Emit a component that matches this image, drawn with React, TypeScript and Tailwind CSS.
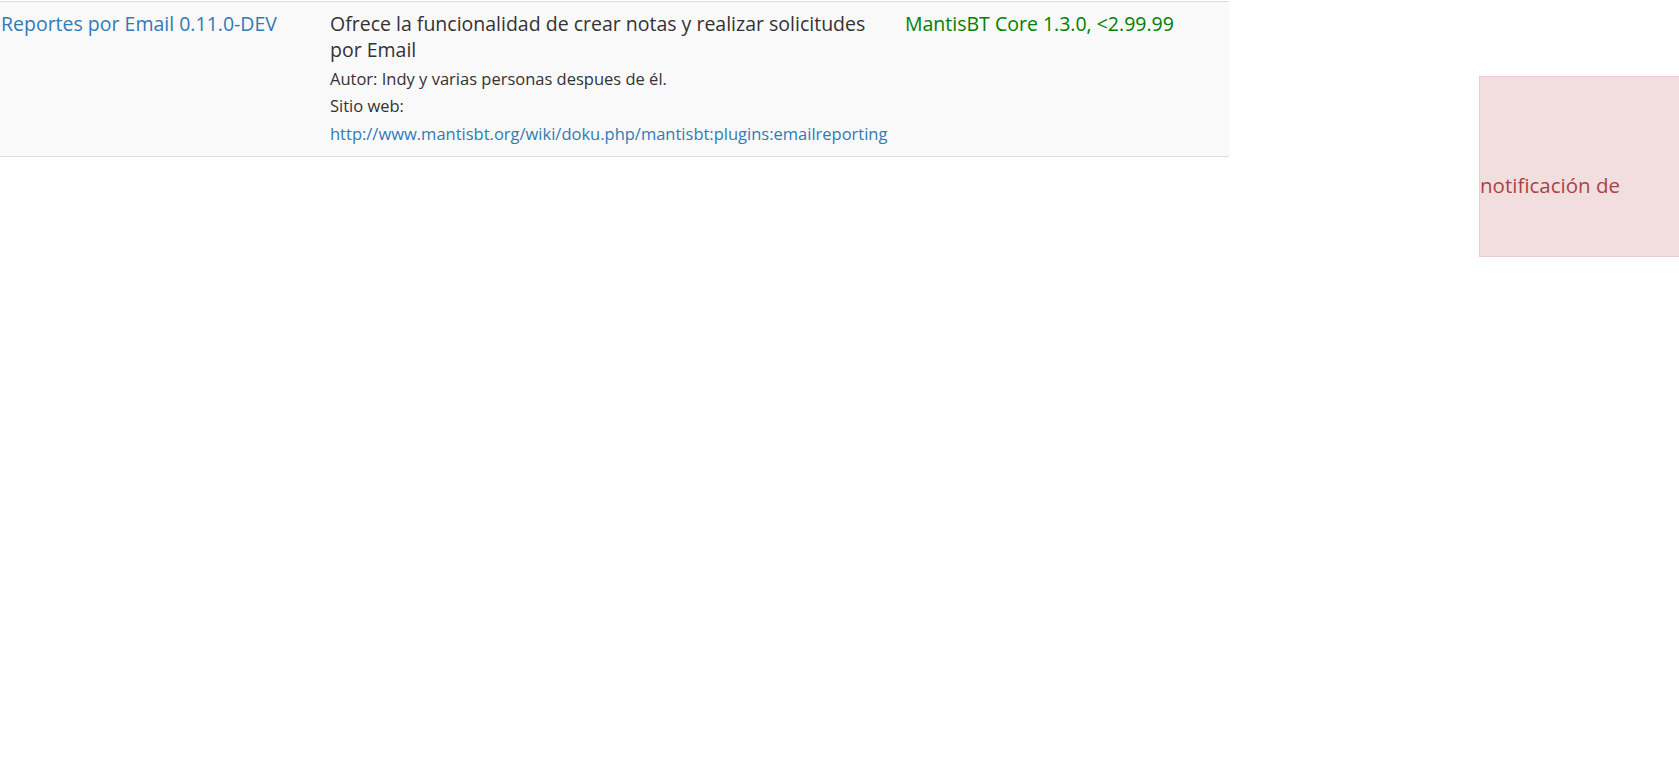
import React from "react";

const plugin = {
  name: "Reportes por Email 0.11.0-DEV",
  description: "Ofrece la funcionalidad de crear notas y realizar solicitudes por Email",
  author: "Autor: Indy y varias personas despues de él.",
  url: "http://www.mantisbt.org/wiki/doku.php/mantisbt:plugins:emailreporting",
  depends: "MantisBT Core 1.3.0, <2.99.99",
};

const App = () => {
  return (
    <div className="relative min-h-[770px] bg-white font-['Open_Sans',sans-serif] text-[#333333]">
      {/* Plugin row */}
      <div className="w-[1229px] pt-px">
        <div className="flex border-y border-[#dddddd] bg-[#f9f9f9] py-[8.5px]">
          <div className="w-[329px] px-px text-[19.5px] leading-[26px]">
            <a href="#" className="text-[#337ab7]">
              {plugin.name}
            </a>
          </div>
          <div className="w-[575px] pl-px pr-[11px]">
            <div className="text-[19.5px] leading-[26px]">{plugin.description}</div>
            <div className="mt-[2px] text-[16.5px] leading-[27.5px]">
              <div>{plugin.author}</div>
              <div>Sitio web:</div>
              <div>
                <a href="#" className="text-[#337ab7]">
                  {plugin.url}
                </a>
              </div>
            </div>
          </div>
          <div className="flex-1 px-px text-[19.5px] leading-[26px] text-[#008000]">
            {plugin.depends}
          </div>
        </div>
      </div>

      {/* Notification */}
      <div className="absolute left-[1479px] top-[76px] h-[181px] w-[200px] overflow-hidden border-y border-l border-[#ebccd1] bg-[#f2dede]">
        <div className="mt-[95px] whitespace-nowrap text-[20.5px] leading-[27px] text-[#a94442]">
          notificación de
        </div>
      </div>
    </div>
  );
};

export default App;
